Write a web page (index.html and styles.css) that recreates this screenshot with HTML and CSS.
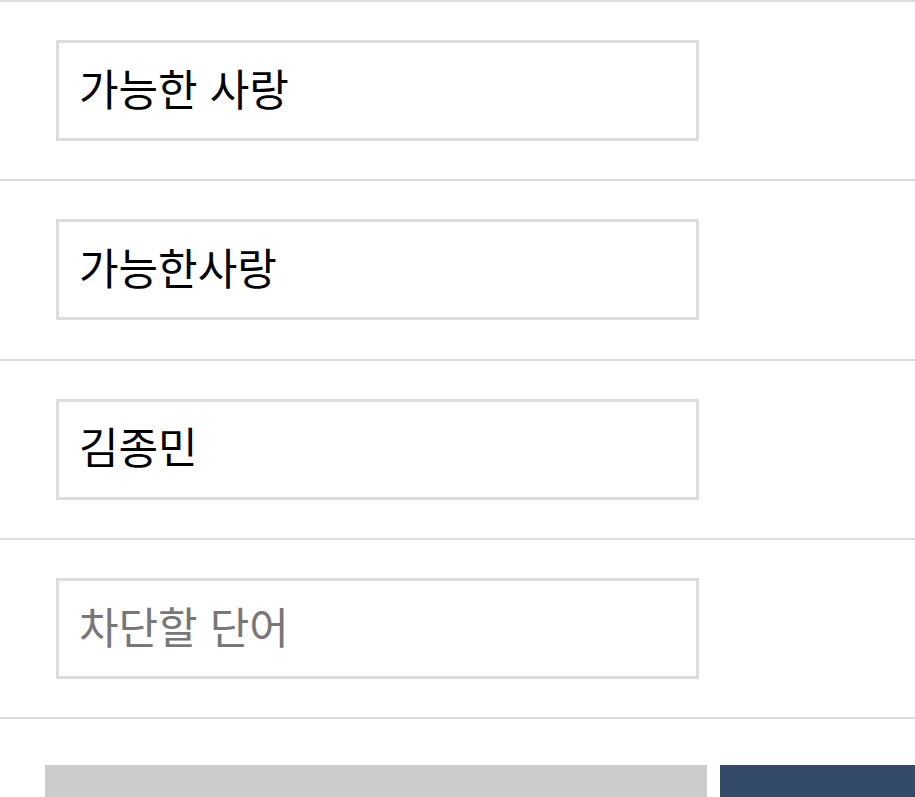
FILE: index.html
```html
<!DOCTYPE html>
<html lang="ko">
<head>
<meta charset="utf-8">
<link rel="stylesheet" href="styles.css">
</head>
<body>
<div class="list">
  <div class="row"><div class="field">가능한 사랑</div></div>
  <div class="row"><div class="field">가능한사랑</div></div>
  <div class="row"><div class="field">김종민</div></div>
  <div class="row"><div class="field placeholder">차단할 단어</div></div>
  <div class="row-end"></div>
</div>
<div class="actions">
  <div class="btn btn-cancel"></div>
  <div class="btn btn-save"></div>
</div>
</body>
</html>
```
FILE: styles.css
```css
html, body {
  margin: 0;
  padding: 0;
  background: #fff;
  overflow: hidden;
}
body {
  font-family: "Noto Sans CJK KR", "Noto Sans", sans-serif;
  width: 915px;
  height: 797px;
}
.list {
  display: flex;
  flex-direction: column;
}
.row {
  border-top: 2px solid #dcdcdc;
  height: 177.3px;
  padding-left: 56px;
  display: flex;
  align-items: center;
}
.row-end {
  border-top: 2px solid #dcdcdc;
}
.field {
  box-sizing: border-box;
  width: 643px;
  height: 101px;
  border: 3px solid #dcdcdc;
  padding: 0 0 7px 20px;
  display: flex;
  align-items: center;
  font-size: 43px;
  line-height: 1;
  color: #000;
}
.placeholder {
  color: #777;
}
.actions {
  display: flex;
  gap: 13px;
  padding-left: 45px;
  margin-top: 46px;
}
.btn {
  height: 50px;
}
.btn-cancel {
  flex: 0 0 662px;
  background: #cccccc;
}
.btn-save {
  flex: 1 1 auto;
  background: #334b69;
}
```
